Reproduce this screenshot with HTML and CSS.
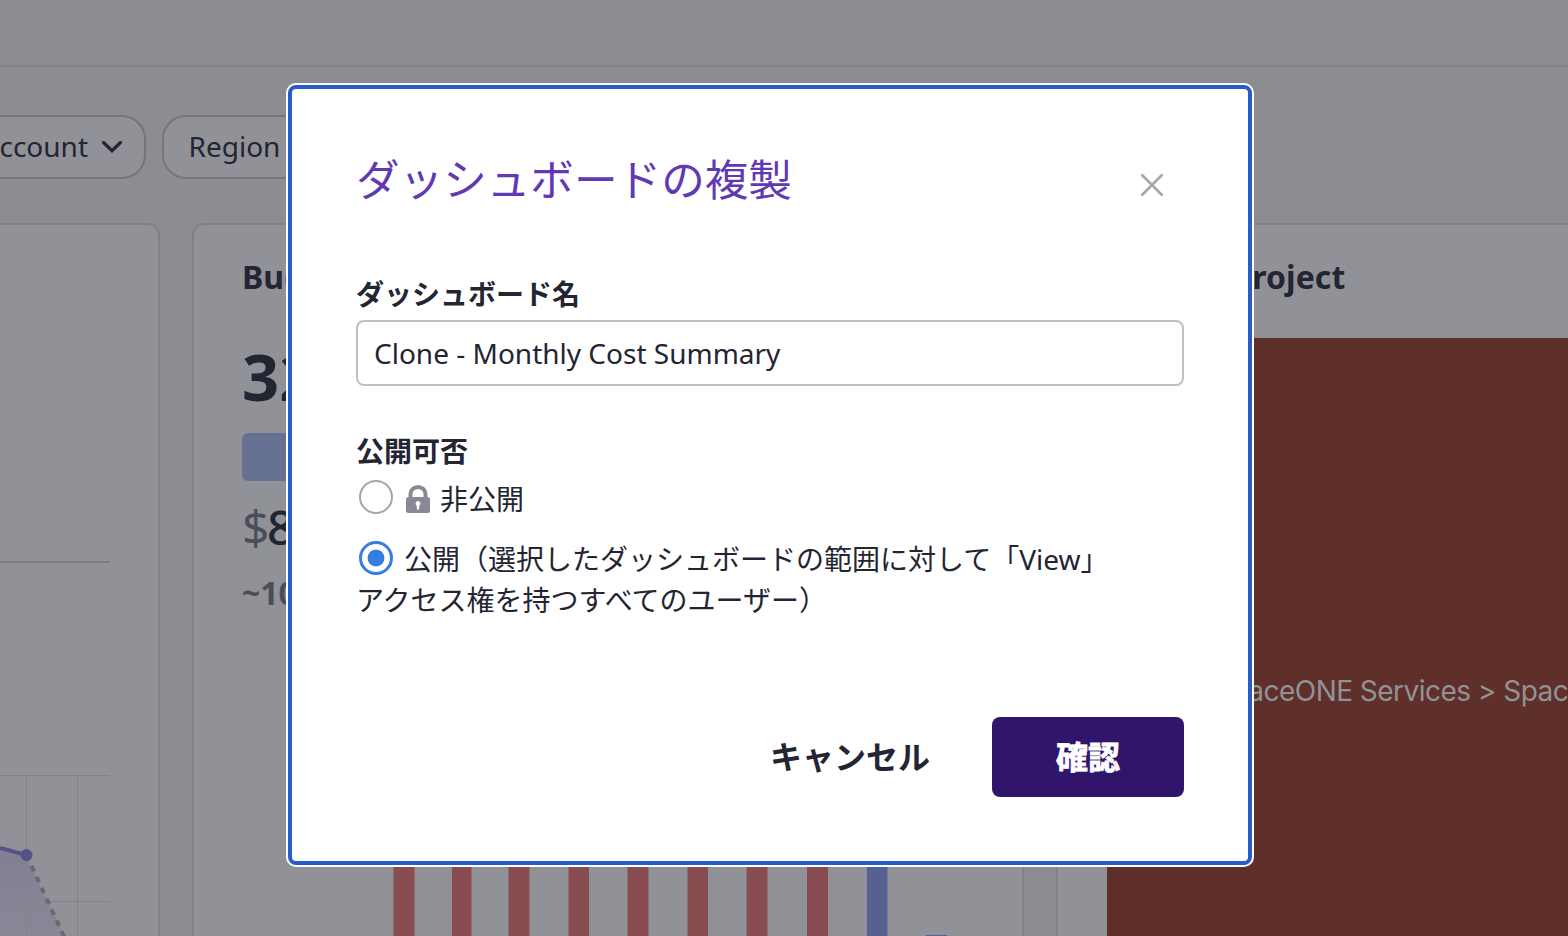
FILE: index.html
```html
<!DOCTYPE html>
<html lang="ja">
<head>
<meta charset="utf-8">
<title>ダッシュボードの複製</title>
<link rel="stylesheet" href="styles.css">
</head>
<body>
<div class="page">
  <header class="topbar"></header>
  <div class="filters">
    <div class="pill pill-first"><span class="pill-text">Account</span>
      <svg class="chevron" width="20" height="12" viewBox="0 0 20 12"><path d="M1.500 1.500 10 9.700 18.500 1.500" fill="none" stroke="#232533" stroke-width="3.200" stroke-linecap="round"/></svg>
    </div>
    <div class="pill pill-region"><span class="pill-text">Region</span></div>
  </div>
  <main class="widgets">
    <section class="card card-trend">
      <div class="divider"></div>
      <svg class="trend" width="110" height="162" viewBox="0 0 110 162">
        <defs><linearGradient id="area" x1="0" y1="0" x2="0" y2="1"><stop offset="0" stop-color="#827f95"/><stop offset="1" stop-color="#898796"/></linearGradient></defs>
        <path d="M0 74 26 81 65 162H0Z" fill="url(#area)"/>
        <path d="M0 .5H110M0 126.500H110M26.500 0V162M77.500 0V162" stroke="#818287" fill="none"/>
        <path d="M0 73 26.500 80" stroke="#565187" stroke-width="4"/>
        <path d="M26.500 80 66 166" stroke="#696a71" stroke-width="4" stroke-dasharray="6 6" stroke-dashoffset="-12"/>
        <circle cx="26.500" cy="80" r="6" fill="#565187"/>
      </svg>
    </section>
    <section class="card card-budget">
      <h2 class="card-title">Budget Usage</h2>
      <div class="percent">32.5%</div>
      <div class="usage"></div>
      <div class="amount"><span class="currency">$</span>8,120</div>
      <div class="approx">~10,000</div>
      <svg class="bars" width="780" height="76" viewBox="0 0 780 76">
        <g fill="#884d50"><path d="M151.500 0h21v76h-21zM210 0h19.500v76H210zM266.500 0h21v76h-21zM326.500 0H347v76h-20.500zM385.500 0h21v76h-21zM445.500 0H466v76h-20.500zM504.500 0h21v76h-21zM565 0h21v76h-21z"/></g>
        <path d="M625 0h20.500v76H625zM684 75h21v1h-21z" fill="#566192"/>
      </svg>
    </section>
    <section class="card card-project">
      <h2 class="card-title">Cost by Project</h2>
      <div class="treemap"><span class="tree-label">SpaceONE Services &gt; SpaceONE</span></div>
    </section>
  </main>
</div>

<div class="overlay">
  <div class="dialog" role="dialog">
    <div class="dialog-head">
      <h1 class="dialog-title">ダッシュボードの複製</h1>
      <svg class="close" width="24" height="24" viewBox="0 0 24 24"><path d="M2.300 2.300 21.700 21.700M21.700 2.300 2.300 21.700" stroke="#a5a6af" stroke-width="2.700" stroke-linecap="round"/></svg>
    </div>
    <label class="label" for="name">ダッシュボード名</label>
    <input class="field" id="name" value="Clone - Monthly Cost Summary">
    <div class="label label-scope">公開可否</div>
    <div class="option option-private">
      <span class="radio"></span>
      <svg class="lock" width="24" height="28" viewBox="0 0 24 28"><path d="M4.500 13V9a7.500 7 0 0 1 15 0V13" fill="none" stroke="#898995" stroke-width="4"/><rect y="12" width="24" height="16" rx="2.500" fill="#898995"/><path d="M12 16a2.600 2.600 0 0 1 1.200 4.800V24.500h-2.400V20.800A2.600 2.600 0 0 1 12 16Z" fill="#fff"/></svg>
      <span class="option-text">非公開</span>
    </div>
    <div class="option-public"><span class="radio radio-on"></span>公開（選択したダッシュボードの範囲に対して「View」<br>アクセス権を持つすべてのユーザー）</div>
    <div class="actions">
      <button class="btn btn-cancel">キャンセル</button>
      <button class="btn btn-confirm">確認</button>
    </div>
  </div>
</div>
</body>
</html>
```

FILE: styles.css
```css
* { box-sizing: border-box; }
body {
  margin: 0;
  width: 1568px;
  height: 936px;
  overflow: hidden;
  font-family: "Noto Sans", "Noto Sans CJK JP", sans-serif;
  color: #232533;
}
.page { width: 1568px; height: 936px; overflow: hidden; background: #8c8d92; }
.topbar { height: 67px; border-bottom: 2px solid #818287; }
.filters { display: flex; gap: 16px; padding-top: 48px; }
.pill {
  display: flex;
  align-items: center;
  height: 64px;
  border: 2px solid #75767b;
  border-radius: 24px;
  background: #919297;
  font-size: 28px;
  line-height: 38px;
}
.pill-text { padding-bottom: 2px; }
.pill-first {
  width: 146px;
  justify-content: flex-end;
  gap: 14px;
  padding-right: 22px;
  border-left: 0;
  border-radius: 0 24px 24px 0;
  overflow: hidden;
}
.chevron { flex: none; }
.pill-region { width: 190px; padding-left: 24.5px; }
.widgets { display: flex; gap: 32px; margin-top: 44px; width: 1900px; }
.card {
  flex: none;
  height: 740px;
  border: 2px solid #818287;
  border-radius: 12px;
  background: #919297;
}
.card-trend { width: 160px; border-left: 0; border-top-left-radius: 0; }
.divider { width: 110px; height: 2px; margin-top: 336px; background: #7e7f84; }
.trend { display: block; margin-top: 212px; }
.card-budget { width: 832px; padding: 30px 0 0 48px; }
.card-project { width: 600px; padding: 30px 0 0 49px; }
.card-title { margin: 0; font-size: 32px; line-height: 44px; font-weight: 700; white-space: nowrap; }
.card-project .card-title { letter-spacing: 0.05px; }
.percent { margin-top: 29px; font-size: 65px; line-height: 96px; font-weight: 700; }
.usage { width: 400px; height: 48px; margin-top: 9px; border-radius: 6px; background: #677292; }
.amount { margin-top: 14px; font-size: 48px; line-height: 64px; font-weight: 500; }
.currency { color: #4b4d59; font-weight: 400; letter-spacing: -2.5px; }
.approx { margin-top: 12px; font-size: 32px; line-height: 44px; font-weight: 700; color: #4b4d59; }
.bars { display: block; margin-top: 245px; }
.treemap { height: 600px; margin-top: 39px; padding: 333px 0 0 107px; background: #5e3029; }
.tree-label { font-family: Inter, sans-serif; font-size: 28px; line-height: 40px; letter-spacing: -0.53px; color: #919297; white-space: nowrap; }

.overlay { position: absolute; inset: 0; padding: 85px 0 0 288px; }
.dialog {
  width: 964px;
  height: 780px;
  padding: 64px 64px 0;
  border: 4px solid #285dc9;
  border-radius: 8px;
  background: #fff;
  box-shadow: 0 0 0 2px #fff;
}
.dialog-head { display: flex; justify-content: space-between; align-items: center; height: 64px; padding-right: 20px; }
.dialog-title { margin: 0; padding-bottom: 13px; color: #6139b4; font-size: 43.6px; line-height: 64px; font-weight: 400; }
.label { display: block; margin-top: 57px; font-size: 28px; line-height: 40px; font-weight: 700; }
.field {
  display: block;
  width: 828px;
  height: 66px;
  margin-top: 6px;
  padding: 0 16px;
  border: 2px solid #bfbfc6;
  border-radius: 8px;
  background: #fff;
  color: #232533;
  font: 400 28px/40px "Noto Sans", sans-serif;
}
.label-scope { margin-top: 45px; }
.option { display: flex; align-items: center; height: 42px; font-size: 28px; line-height: 42px; }
.option-private { margin-top: 5px; }
.option-text { padding-top: 4px; }
.lock { margin: 3px 10px 0 13px; }
.radio {
  display: inline-block;
  flex: none;
  width: 34px;
  height: 34px;
  margin-left: 3px;
  border: 2px solid #a5a6af;
  border-radius: 50%;
  background: #fff;
}
.radio-on {
  margin-right: 11px;
  border-color: #367de2;
  border-width: 3px;
  background: radial-gradient(circle, #367de2 8px, #fff 8.8px);
  vertical-align: -5px;
}
.option-public { margin-top: 21px; font-size: 28px; line-height: 41px; white-space: nowrap; }
.actions { display: flex; justify-content: flex-end; gap: 16px; margin-top: 96px; }
.btn {
  height: 80px;
  padding: 0;
  border: 0;
  border-radius: 8px;
  font: 700 32px/48px "Noto Sans", "Noto Sans CJK JP", sans-serif;
}
.btn-cancel { width: 252px; background: transparent; color: #232533; }
.btn-confirm { width: 192px; background: #30156b; color: #fff; -webkit-text-stroke: 0.8px #fff; }
```
